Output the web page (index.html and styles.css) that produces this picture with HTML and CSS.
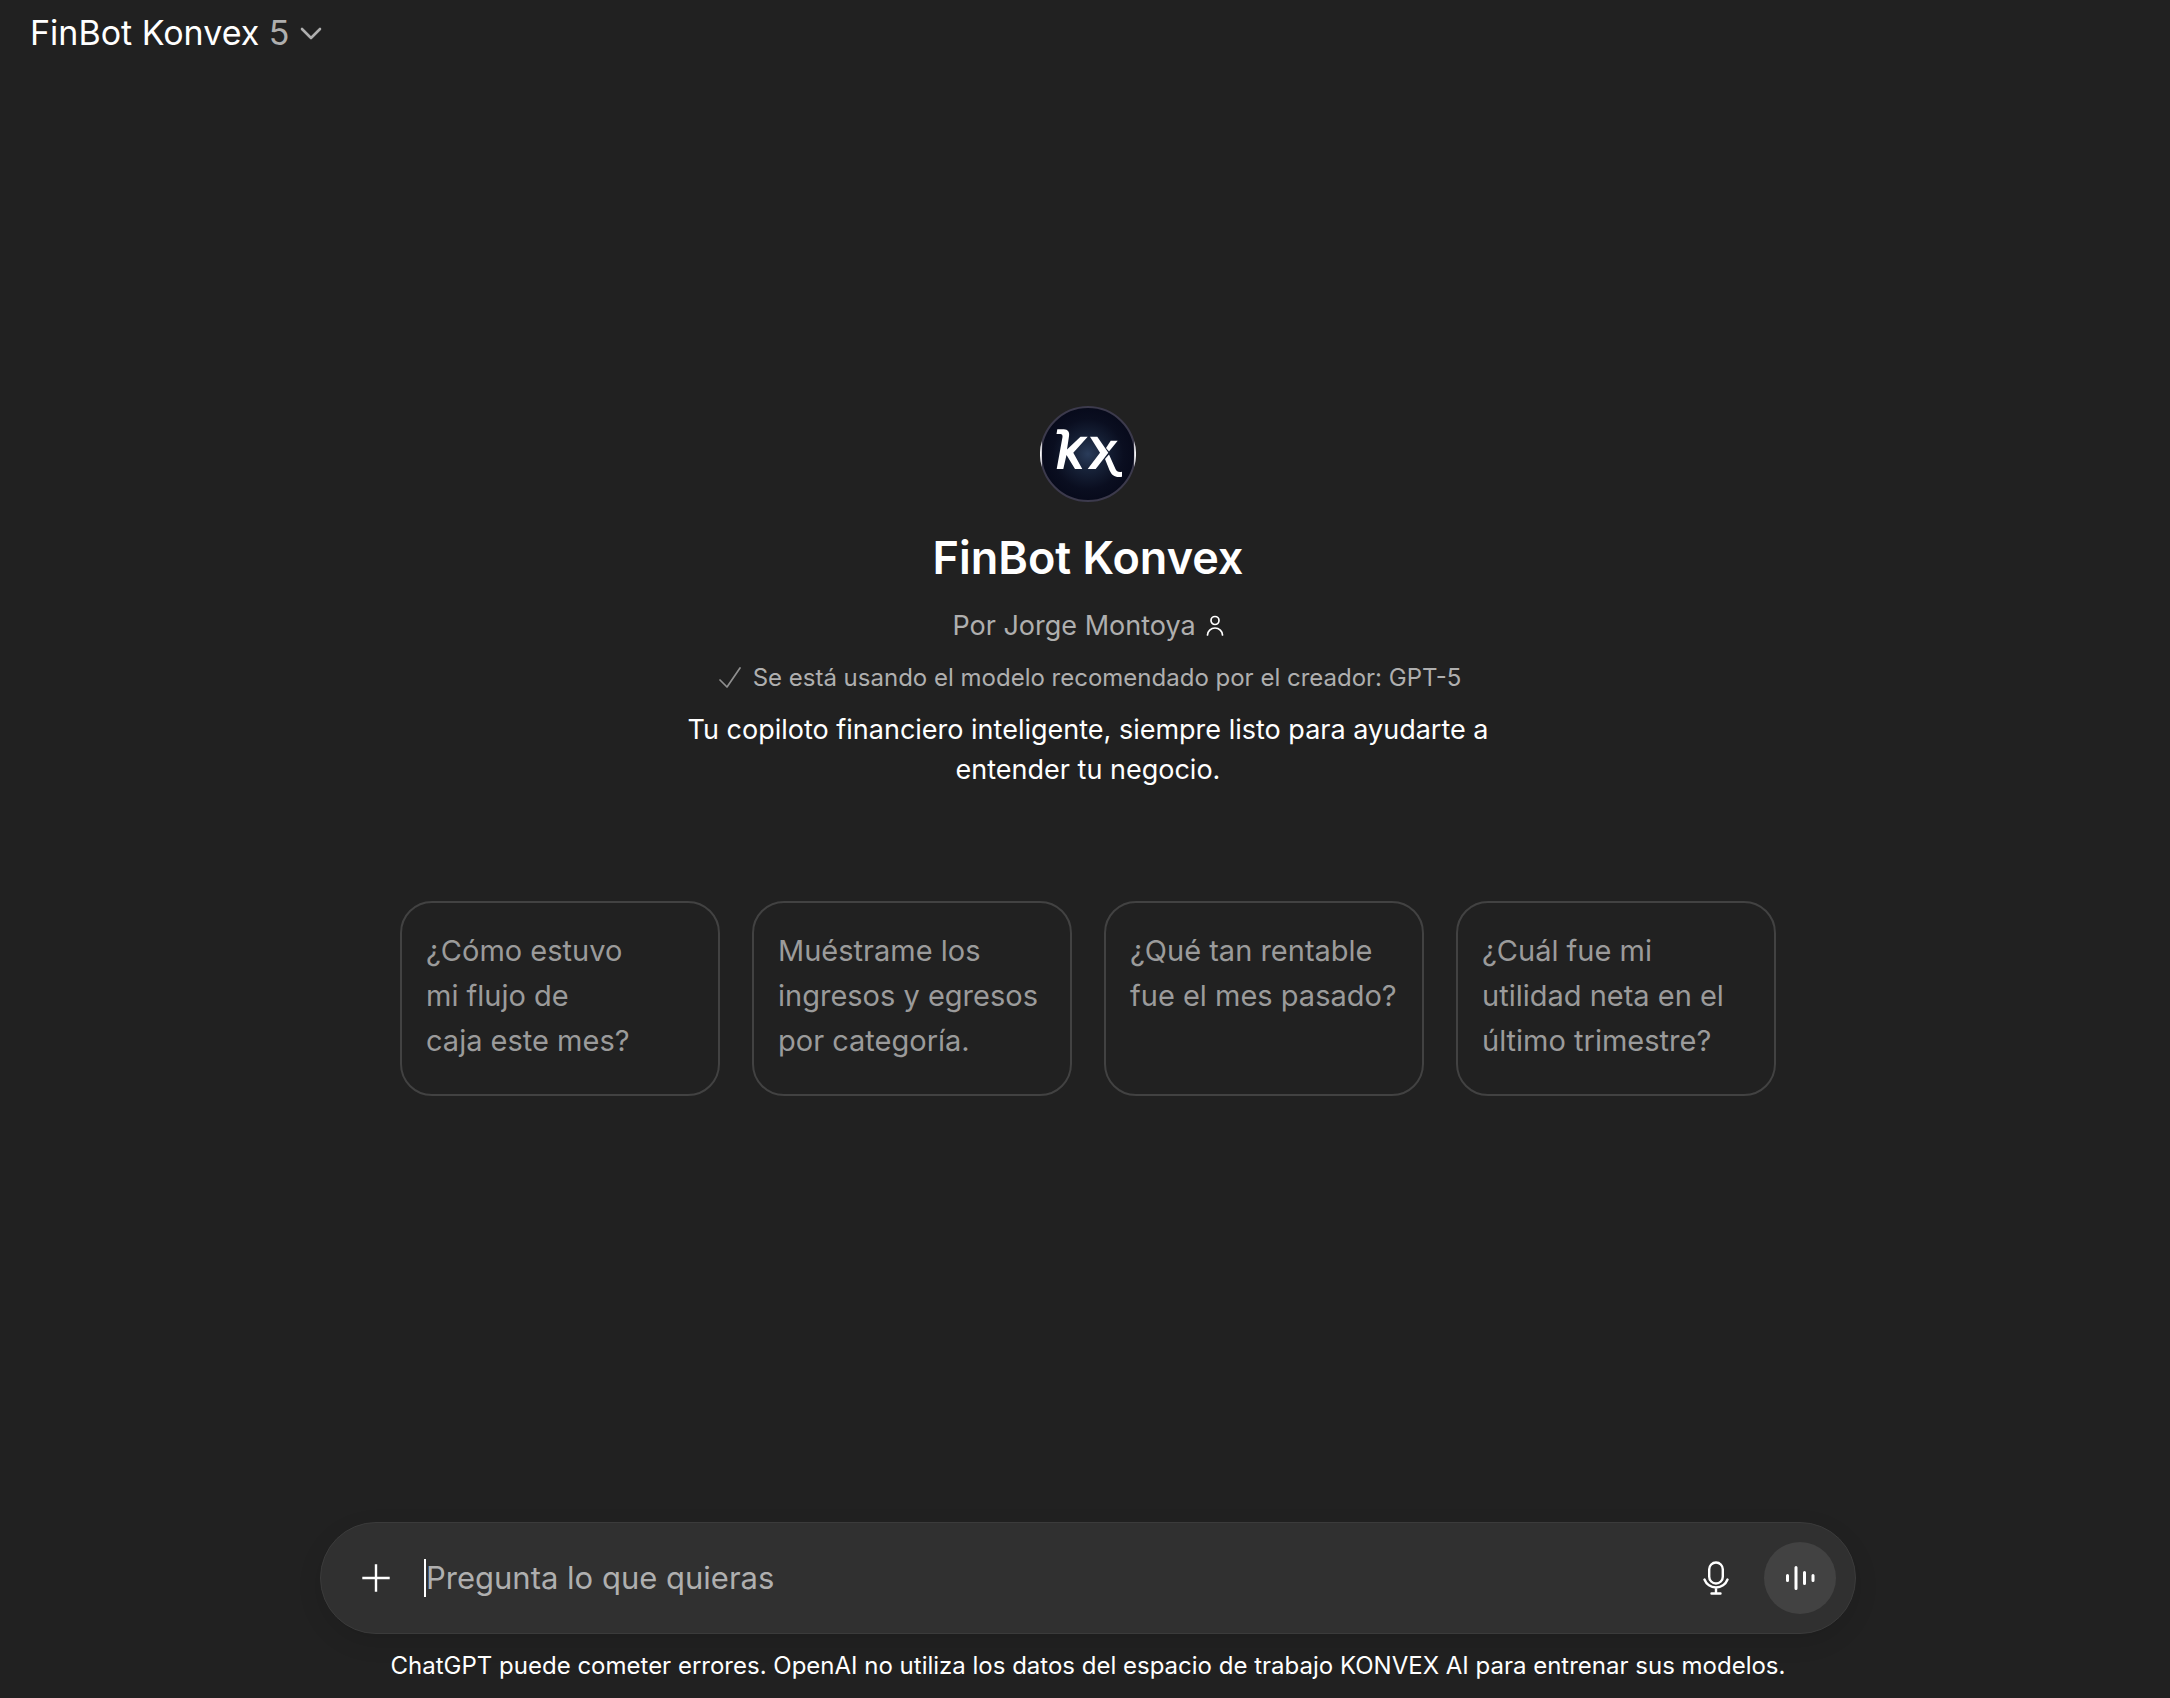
FILE: index.html
```html
<!DOCTYPE html>
<html lang="es">
<head>
  <meta charset="utf-8">
  <meta name="viewport" content="width=device-width, initial-scale=1">
  <title>FinBot Konvex</title>
  <link rel="stylesheet" href="styles.css">
</head>
<body>
  <header class="topbar">
    <button class="model-switch" type="button">
      <span>FinBot Konvex <span class="model-version">5</span></span>
      <svg class="chevron" width="22" height="14" viewBox="0 0 22 14" fill="none" stroke="currentColor" stroke-width="2.6" stroke-linecap="round" stroke-linejoin="round" aria-hidden="true"><path d="M2 3l9 9 9-9"/></svg>
    </button>
  </header>

  <main class="welcome">
    <section class="intro">
      <svg class="avatar" viewBox="0 0 96 96" role="img" aria-label="KX">
        <defs>
          <radialGradient id="glow" cx="50%" cy="50%" r="50%">
            <stop offset="0" stop-color="#2a3c5a"/>
            <stop offset=".35" stop-color="#172238"/>
            <stop offset=".75" stop-color="#0a0e20"/>
            <stop offset="1" stop-color="#070a1b"/>
          </radialGradient>
        </defs>
        <circle cx="48" cy="48" r="47" fill="url(#glow)" stroke="#3c3a4c" stroke-width="2"/>
        <path fill="#f4f4f6" d="M1.800 35A48 48 0 0 0 1.800 61zM94.200 35A48 48 0 0 1 94.200 61z"/>
        <g fill="#fff">
          <path d="M17.300 23.300h6.500c4.200 0 6 3 5.200 7L27 43.500 40.500 30.700h7.200L33.300 46.700 42.300 63h-7.300L26.500 49 23.300 63H16.700L22.500 31c.3-2-.7-3-2-3h-4z"/>
          <path d="M50 30.700h7.300L68.300 46.700 55.700 63h-8L60 46.700z"/>
          <path d="M70.700 34.700h7L69 45.500 66 42z"/>
          <path d="M69 48.500l6.500 14.500c1 2.500 3 3.500 6.500 2.800v5c-7 1-10-1-12.500-6.500L65 53z"/>
        </g>
      </svg>
      <h1 class="title">FinBot Konvex</h1>
      <p class="byline">
        Por Jorge Montoya
        <svg width="18" height="22" viewBox="0 0 18 22" fill="none" stroke="#fff" stroke-width="1.7" stroke-linecap="round" aria-hidden="true"><circle cx="9" cy="5.5" r="4"/><path d="M1.500 20a7.500 7 0 0 1 15 0"/></svg>
      </p>
      <p class="model-note">
        <svg width="22" height="22" viewBox="0 0 22 22" fill="none" stroke="#8f8f8f" stroke-width="1.7" stroke-linecap="round" stroke-linejoin="round" aria-hidden="true"><path d="M1 13l7 7L21 1"/></svg>
        Se está usando el modelo recomendado por el creador: GPT-5
      </p>
      <p class="description">Tu copiloto financiero inteligente, siempre listo para ayudarte a entender tu negocio.</p>
    </section>

    <section class="prompts">
      <button class="prompt" type="button">¿Cómo estuvo mi&nbsp;flujo de caja&nbsp;este&nbsp;mes?</button>
      <button class="prompt" type="button">Muéstrame los ingresos y egresos por categoría.</button>
      <button class="prompt" type="button">¿Qué tan rentable fue el mes pasado?</button>
      <button class="prompt" type="button">¿Cuál fue mi utilidad neta en el último trimestre?</button>
    </section>
  </main>

  <footer class="bottom">
    <form class="composer">
      <button class="icon-button" type="button" aria-label="Añadir">
        <svg width="28" height="28" viewBox="0 0 28 28" fill="none" stroke="currentColor" stroke-width="2.4" stroke-linecap="square" aria-hidden="true"><path d="M14 1.500v25M1.500 14h25"/></svg>
      </button>
      <span class="caret"></span>
      <input class="composer-input" type="text" placeholder="Pregunta lo que quieras" aria-label="Pregunta lo que quieras">
      <button class="icon-button" type="button" aria-label="Dictar">
        <svg width="26" height="34" viewBox="0 0 26 34" fill="none" stroke="currentColor" stroke-width="2.4" stroke-linecap="round" aria-hidden="true"><rect x="6.200" y="1.500" width="13.600" height="21" rx="6.800"/><path d="M1.500 18.500a12.300 12.300 0 0 0 23 0M13 26.500v6M8.500 32.500h9"/></svg>
      </button>
      <button class="voice-button" type="button" aria-label="Modo de voz">
        <svg width="30" height="26" viewBox="0 0 30 26" fill="none" stroke="currentColor" stroke-width="3" stroke-linecap="round" aria-hidden="true"><path d="M2.500 10.500v5M11 2.500v21M19.500 7.500v11M28 10.500v5"/></svg>
      </button>
    </form>
    <p class="disclaimer">ChatGPT puede cometer errores. OpenAI no utiliza los datos del espacio de trabajo KONVEX AI para entrenar sus modelos.</p>
  </footer>
</body>
</html>
```
FILE: styles.css
```css
* {
  box-sizing: border-box;
}

body {
  display: flex;
  flex-direction: column;
  min-height: 100vh;
  margin: 0;
  padding-left: 6px;
  background: #212121;
  color: #fff;
  font-family: Inter, "Liberation Sans", sans-serif;
}

button,
input {
  margin: 0;
  padding: 0;
  border: 0;
  background: none;
  color: inherit;
  font: inherit;
}

button {
  cursor: pointer;
}

h1,
p {
  margin: 0;
}

svg {
  display: block;
  flex: none;
}

.topbar {
  padding: 9px 24px 7px;
}

.model-switch {
  display: flex;
  align-items: center;
  gap: 10px;
  font-size: 34px;
  line-height: 48px;
}

.model-version,
.chevron {
  color: #afafaf;
}

.welcome {
  display: flex;
  flex: 1;
  flex-direction: column;
  align-items: center;
  justify-content: center;
  gap: 111px;
  padding: 0 32px 84px;
}

.intro {
  display: flex;
  flex-direction: column;
  align-items: center;
  max-width: 832px;
  text-align: center;
}

.avatar {
  width: 96px;
  height: 96px;
}

.title {
  margin-top: 24px;
  font-size: 45px;
  font-weight: 600;
  line-height: 64px;
}

.byline {
  display: flex;
  align-items: center;
  gap: 10px;
  margin-top: 16px;
  color: #afafaf;
  font-size: 27px;
  line-height: 40px;
}

.model-note {
  display: flex;
  align-items: center;
  gap: 12px;
  margin-top: 14px;
  padding-left: 4px;
  color: #afafaf;
  font-size: 24px;
  line-height: 36px;
}

.description {
  margin-top: 14px;
  font-size: 27px;
  line-height: 40px;
}

.prompts {
  display: grid;
  grid-template-columns: repeat(4, 1fr);
  gap: 32px;
  width: 100%;
  max-width: 1376px;
}

.prompt {
  display: flex;
  align-items: flex-start;
  padding: 25px 24px 31px;
  border: 2px solid #424242;
  border-radius: 32px;
  color: #9b9b9b;
  font-size: 29px;
  line-height: 45px;
  text-align: left;
}

.bottom {
  display: flex;
  flex-direction: column;
  align-items: center;
  padding: 0 32px 15px;
}

.composer {
  display: flex;
  align-items: center;
  width: 100%;
  max-width: 1536px;
  height: 112px;
  padding: 0 19px;
  border: 1px solid #3b3b3b;
  border-radius: 56px;
  background: #303030;
  box-shadow: 0 8px 24px #0000001a;
}

.icon-button {
  display: grid;
  place-items: center;
  width: 72px;
  height: 72px;
}

.caret {
  width: 2px;
  height: 38px;
  margin-left: 12px;
  background: #fff;
}

.composer-input {
  flex: 1;
  min-width: 0;
  font-size: 31px;
  line-height: 48px;
  outline: 0;
}

.composer-input::placeholder {
  color: #afafaf;
  opacity: 1;
}

.voice-button {
  display: grid;
  place-items: center;
  width: 72px;
  height: 72px;
  margin-left: 12px;
  border-radius: 50%;
  background: #424242;
}

.disclaimer {
  margin-top: 15px;
  font-size: 24px;
  line-height: 34px;
  text-align: center;
}
```
